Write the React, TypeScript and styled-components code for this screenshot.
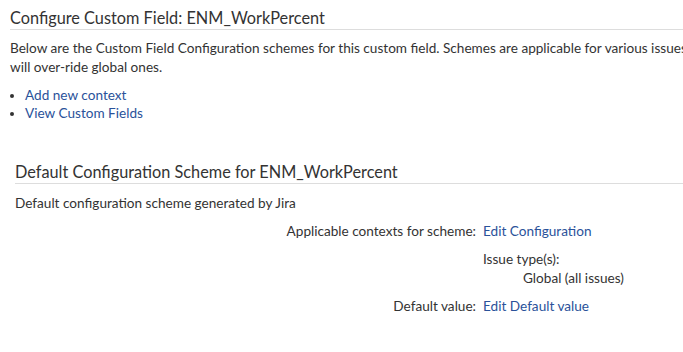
import React from "react";
import styled, { createGlobalStyle } from "styled-components";

const GlobalStyle = createGlobalStyle`
    html, body {
        overflow: hidden;
    }
    body {
        margin: 0;
        background: #ffffff;
        font-family: Lato, "Open Sans", sans-serif;
        color: #333333;
    }
`

const App = () => {
    return (
        <>
        <GlobalStyle />
        <Page>
            <Heading>Configure Custom Field: ENM_WorkPercent</Heading>
            <Intro>
                Below are the Custom Field Configuration schemes for this custom field. Schemes are applicable for various issues types and projects. Project-specific schemes<br />
                will over-ride global ones.
            </Intro>
            <Links>
                <li><Link href="#">Add new context</Link></li>
                <li><Link href="#">View Custom Fields</Link></li>
            </Links>
            <Scheme>
                <SchemeHeading>Default Configuration Scheme for ENM_WorkPercent</SchemeHeading>
                <Description>Default configuration scheme generated by Jira</Description>
                <Details>
                    <Label>Applicable contexts for scheme:</Label>
                    <Value><Link href="#">Edit Configuration</Link></Value>
                    <span />
                    <Value>
                        <SubTitle>Issue type(s):</SubTitle>
                        <SubItem>Global (all issues)</SubItem>
                    </Value>
                    <Label>Default value:</Label>
                    <Value><Link href="#">Edit Default value</Link></Value>
                </Details>
            </Scheme>
        </Page>
        </>
    )
}

const Page = styled.div`
    padding: 7px 0 0 10px;
    width: 1100px;
    font-size: 13.6px;
    color: #333333;
`

const Heading = styled.h2`
    margin: 0;
    font-size: 16.3px;
    line-height: 22px;
    font-weight: 400;
    color: #333333;
    border-bottom: 1px solid #dddddd;
`

const Intro = styled.p`
    margin: 9px 0 0;
    line-height: 19px;
    white-space: nowrap;
`

const Links = styled.ul`
    margin: 9px 0 0;
    padding-left: 15px;
    line-height: 18px;
`

const Link = styled.a`
    color: #2a529a;
    text-decoration: none;
`

const Scheme = styled.div`
    margin: 39px 0 0 5px;
`

const SchemeHeading = styled.h3`
    margin: 0;
    font-size: 16.3px;
    line-height: 22px;
    font-weight: 400;
    border-bottom: 1px solid #dddddd;
`

const Description = styled.p`
    margin: 10px 0 0;
    line-height: 18px;
`

const Details = styled.div`
    display: grid;
    grid-template-columns: 461px auto;
    column-gap: 7px;
    row-gap: 9px;
    margin-top: 10px;
    line-height: 19px;
`

const Label = styled.div`
    text-align: right;
`

const Value = styled.div``

const SubTitle = styled.div``

const SubItem = styled.div`
    padding-left: 40px;
`

export default App
